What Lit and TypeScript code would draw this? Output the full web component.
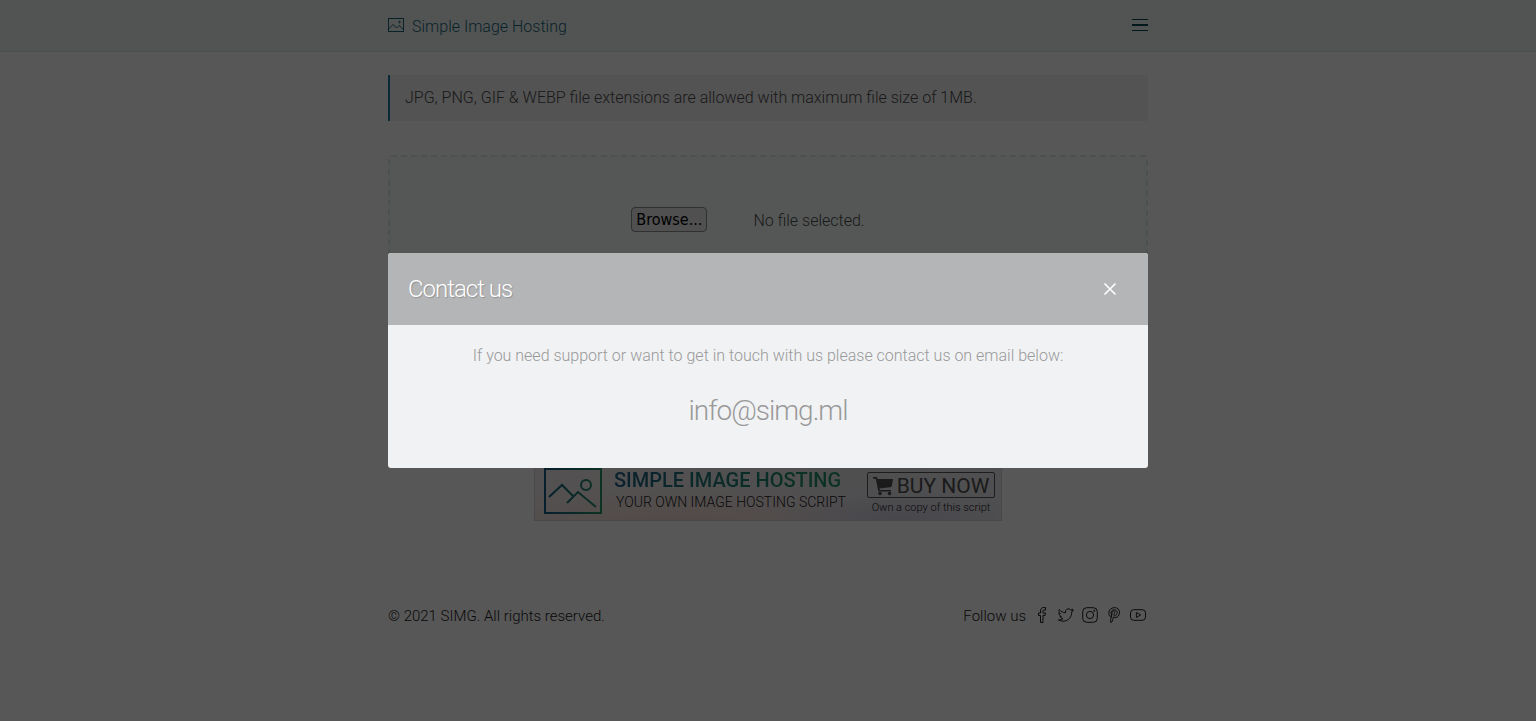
import { LitElement, html, css, svg } from "lit";
import { customElement, state } from "lit/decorators.js";

const stroke = (body: unknown, label = "", viewBox = "0 0 16 16") => html`
  <svg class="icon" viewBox=${viewBox} fill="none" stroke="currentColor" role="img" aria-label=${label}>${body}</svg>
`;

const socials = [
  {
    name: "Facebook",
    body: svg`<path d="M6.500 15.500v-7h-2v-2.500h2V4c0-2 1-3.500 3-3.500h2V3h-1.500C9.200 3 9 3.300 9 4v2h2.500L11 8.500H9v7z"/>`,
  },
  {
    name: "Twitter",
    body: svg`<path d="M15.300 3.300c-.5.300-1 .4-1.700.5.600-.4 1-1 1.200-1.600-.6.300-1.200.6-2 .7a3 3 0 0 0-5.200 2.800C5 5.600 2.900 4.400 1.300 2.500c-.8 1.500-.4 3.200 1 4.200-.5 0-1-.1-1.400-.4 0 1.500 1 2.800 2.500 3.100-.5.100-.9.200-1.400.1.400 1.200 1.500 2 2.900 2.100-1.300 1-2.800 1.400-4.500 1.300 1.400.8 3 1.300 4.700 1.300 5.600 0 8.800-4.700 8.600-9.200.6-.4 1.200-1 1.600-1.700z"/>`,
  },
  {
    name: "Instagram",
    body: svg`<rect x=".7" y=".7" width="14.600" height="14.600" rx="4"/><circle cx="8" cy="8" r="3.600"/><circle cx="12.200" cy="3.800" r=".6"/>`,
  },
  {
    name: "Pinterest",
    body: svg`<path d="M4.500 9.800C3.400 9 2.800 7.900 2.800 6.300 2.800 3 5.200.600 8.500.600c3 0 5 2 5 4.600 0 3.100-1.700 5.500-4.200 5.500-.9 0-1.500-.3-1.800-.9l-.8 3c-.2 1-.8 2-1.300 2.700l-.7-.2c-.1-.9-.2-2 0-2.900L6 7c-.9-2.200 1.800-4.400 2.700-2.600.5 1.200-1.300 3.200-.5 4.200 1.500 1.200 3-1.200 2.900-3.200C11 1.600 5 1.900 5 6.100c0 .9.400 1.500.6 1.900z"/>`,
  },
  {
    name: "YouTube",
    body: svg`<rect x=".5" y="2.700" width="15" height="10.600" rx="3.200"/><path d="M6.400 5.500 10.600 8l-4.200 2.500z"/>`,
  },
];

@customElement("app-root")
export class AppRoot extends LitElement {
  @state() private open = true;

  static styles = css`
    :host {
      display: block;
      min-height: 100vh;
      background: #fefefe;
      color: #4c4c4c;
      font: 300 16px/24px Roboto, "Liberation Sans", sans-serif;
    }
    * { box-sizing: border-box; }
    a { color: inherit; text-decoration: none; }
    button { font: inherit; color: inherit; cursor: pointer; }
    .icon { display: block; width: 16px; height: 16px; }
    .wrap { max-width: 760px; margin: 0 auto; }
    .top { background: #eef7f4; border-bottom: 1px solid #dfe2e2; }
    .bar { display: flex; align-items: center; justify-content: space-between; height: 51px; }
    .brand { display: flex; align-items: center; gap: 8px; color: #1a6478; padding-top: 2px; }
    .brand .icon { margin-bottom: 4px; }
    .burger { border: 0; background: none; padding: 0 0 2px; color: #004850; }
    .note { margin: 23px 0 34px; padding: 11px 15px; border-left: 2px solid #1f78a8; background: #f2f2f2; }
    .note p { margin: 0; }
    .drop {
      display: flex;
      justify-content: center;
      align-items: flex-start;
      gap: 46px;
      min-height: 240px;
      padding: 50px 40px 50px 0;
      border: 2px dashed #e4eae8;
      border-radius: 3px;
      background: #f8fffc;
    }
    .browse {
      height: 25px;
      padding: 1px 4px 0;
      border: 1px solid #8c8c90;
      border-radius: 4px;
      background: #e9e9ed;
      color: #000;
      font: 400 16px/22px "DejaVu Sans Condensed", "Noto Sans", sans-serif;
    }
    .file { padding-top: 2px; }
    .ad {
      display: flex;
      width: 468px;
      height: 60px;
      margin: 66px auto 83px;
      border: 1px solid #d8d4d8;
      padding: 5px 6px 0 9px;
      color: #222;
      background:
        radial-gradient(ellipse 130px 34px at 78% 100%, #d2d0de, transparent),
        radial-gradient(ellipse 220px 40px at 30% 110%, #f4d8d0, transparent),
        linear-gradient(90deg, #f4eeec, #ebe7ea 60%, #e8e8ec);
    }
    .mark { width: 58px; height: 48px; flex: none; }
    .pitch { display: flex; flex-direction: column; padding: 1px 0 0 12px; width: 265px; }
    .title {
      align-self: flex-start;
      font-size: 20px;
      line-height: 24px;
      font-weight: 500;
      white-space: nowrap;
      background: linear-gradient(90deg, #1e5f85, #1f8a6a 75%, #259468);
      background-clip: text;
      color: transparent;
    }
    .sub { font-size: 14px; line-height: 20px; padding-left: 2px; white-space: nowrap; }
    .buy { display: flex; flex-direction: column; align-items: center; padding-top: 5px; flex: 1; }
    .cta {
      display: flex;
      align-items: center;
      justify-content: center;
      gap: 4px;
      width: 128px;
      height: 26px;
      padding-top: 1px;
      border: 1px solid #555;
      border-radius: 2px;
      color: #505050;
      font-size: 21px;
      font-weight: 400;
      white-space: nowrap;
    }
    .cta .icon { width: 20px; height: 20px; }
    .small { font-size: 11px; line-height: 20px; }
    footer { display: flex; justify-content: space-between; font-size: 15px; color: #222; }
    .follow { display: flex; gap: 8px; }
    .follow a { padding-top: 3px; }
    .follow nav { display: flex; gap: 8px; padding-right: 2px; }
    .overlay {
      position: fixed;
      inset: 0;
      display: flex;
      align-items: center;
      justify-content: center;
      background: rgba(0, 0, 0, 0.66);
    }
    .modal {
      width: 760px;
      max-width: 100%;
      border-radius: 3px;
      overflow: hidden;
      background: #f1f2f4;
      color: #999;
      text-align: center;
    }
    .head {
      display: flex;
      align-items: center;
      justify-content: space-between;
      height: 72px;
      padding: 0 30px 0 20px;
      background: #b4b5b7;
      color: #fff;
      text-shadow: 1px 1px 1px rgba(0, 0, 0, 0.2);
    }
    h2 { margin: 0; font-size: 24px; line-height: 32px; font-weight: 300; letter-spacing: -1px; }
    .close { border: 0; background: none; padding: 0; }
    .body { padding: 19px 20px 37px; }
    .body p { margin: 0 0 23px; }
    .mail { display: block; font-size: 28px; line-height: 40px; letter-spacing: -1px; }
  `;

  render() {
    return html`
      <header class="top">
        <div class="wrap bar">
          <a class="brand" href="#">
            ${stroke(svg`<rect x=".5" y="1.500" width="15" height="13"/><path d="M.5 12 5 7.500l3.500 3.500L11 8.500l4.500 4"/><circle cx="11.500" cy="5" r=".8"/>`)}
            Simple Image Hosting
          </a>
          <button class="burger" aria-label="Menu">
            ${stroke(svg`<path d="M0 2.500h16M0 13.500h16"/><path stroke-width="2" d="M0 8h16"/>`)}
          </button>
        </div>
      </header>
      <main class="wrap">
        <section class="note"><p>JPG, PNG, GIF &amp; WEBP file extensions are allowed with maximum file size of 1MB.</p></section>
        <section class="drop">
          <button class="browse">Browse...</button>
          <span class="file">No file selected.</span>
        </section>
        <a class="ad" href="#">
          <svg class="mark" viewBox="0 0 58 48" fill="none" stroke="url(#g)" stroke-width="2">
            <defs><linearGradient id="g" gradientUnits="userSpaceOnUse" x1="0" y1="0" x2="58" y2="0"><stop stop-color="#175a85" /><stop offset="1" stop-color="#259468" /></linearGradient></defs>
            <rect x="1" y="2" width="56" height="44" />
            <path d="M5 30 18 18l11 11M23 36l11-11 18 15" />
            <circle cx="42" cy="18" r="5" />
          </svg>
          <span class="pitch"><span class="title">SIMPLE IMAGE HOSTING</span><span class="sub">YOUR OWN IMAGE HOSTING SCRIPT</span></span>
          <span class="buy">
            <span class="cta">
              <svg class="icon" viewBox="0 0 20 20" fill="currentColor"><path d="M0 1h4l.6 2H20l-1.500 8L6.500 12.500l.3 1.500H18v1.600H5.300L2.800 2.800H0z" /><circle cx="7" cy="17.500" r="1.800" /><circle cx="16.500" cy="17.500" r="1.800" /></svg>
              BUY NOW
            </span>
            <span class="small">Own a copy of this script</span>
          </span>
        </a>
        <footer>
          <span>© 2021 SIMG. All rights reserved.</span>
          <div class="follow">
            <span>Follow us</span>
            <nav>${socials.map((s) => html`<a href="#">${stroke(s.body, s.name)}</a>`)}</nav>
          </div>
        </footer>
      </main>
      ${this.open
        ? html`<div class="overlay">
            <section class="modal" role="dialog" aria-labelledby="contact">
              <div class="head">
                <h2 id="contact">Contact us</h2>
                <button class="close" aria-label="Close" @click=${() => (this.open = false)}>
                  ${stroke(svg`<path stroke-width="1.600" d="M2.500 2.500l11 11M13.500 2.500l-11 11"/>`)}
                </button>
              </div>
              <div class="body">
                <p>If you need support or want to get in touch with us please contact us on email below:</p>
                <a class="mail" href="mailto:info@simg.ml">info@simg.ml</a>
              </div>
            </section>
          </div>`
        : null}
    `;
  }
}
